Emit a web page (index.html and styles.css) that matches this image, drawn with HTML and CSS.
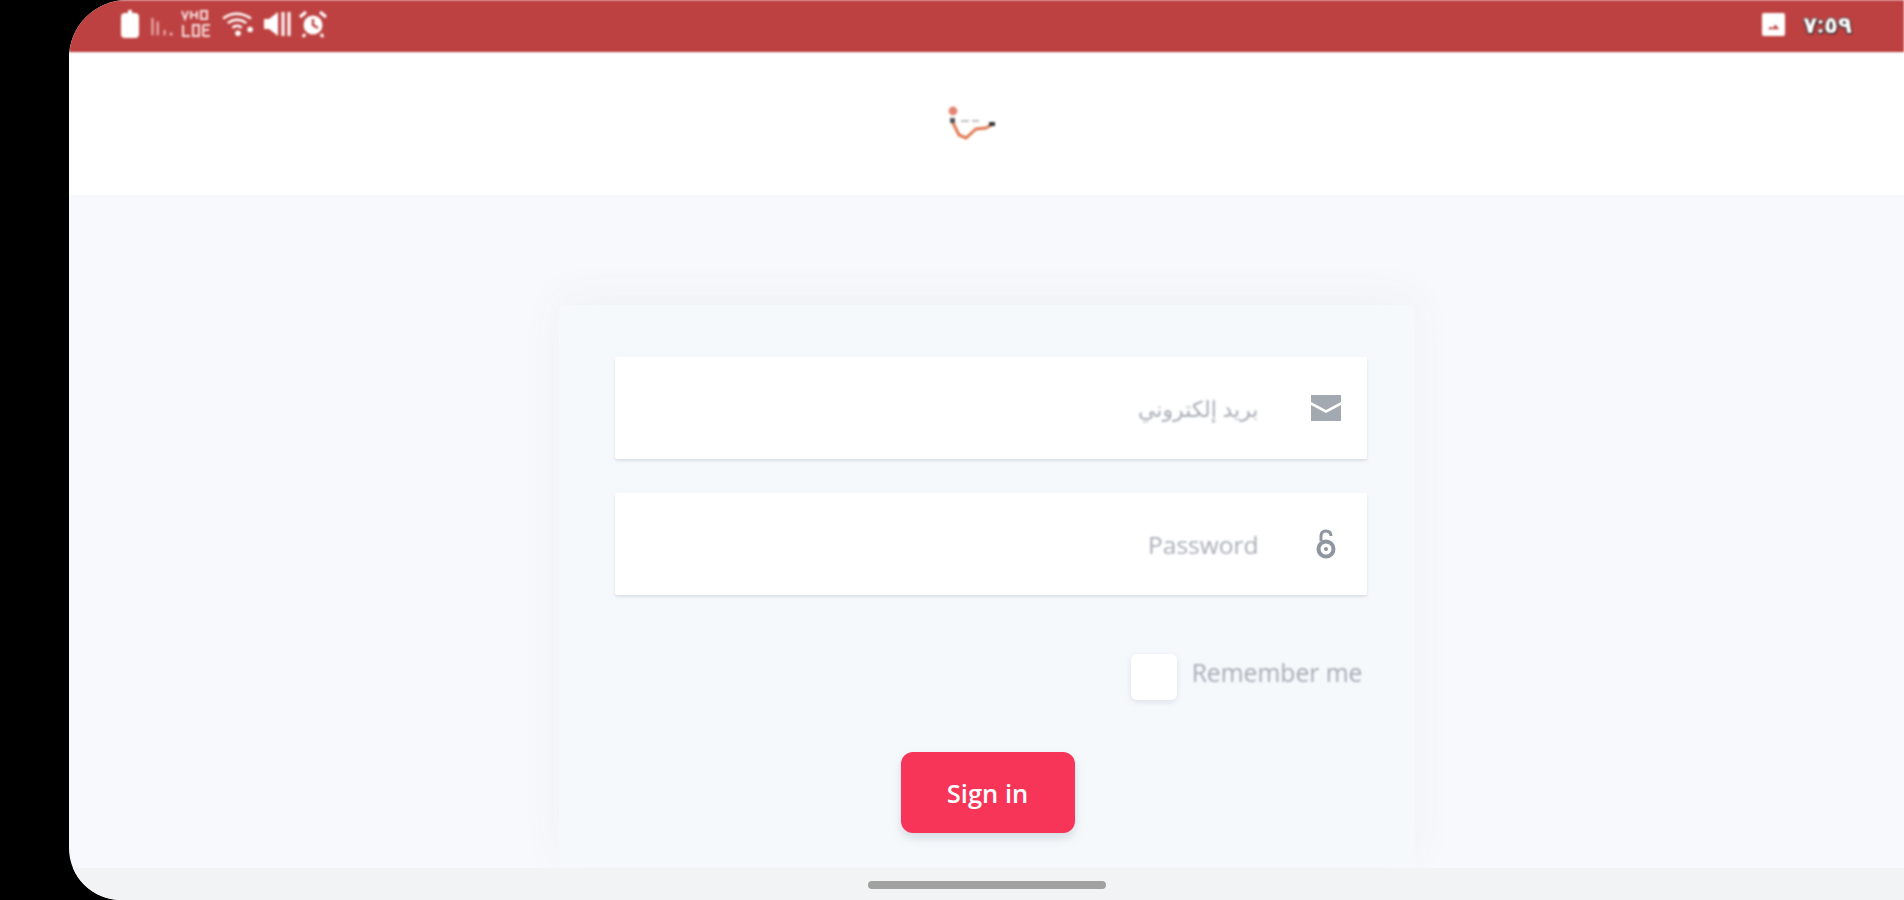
FILE: index.html
```html
<!DOCTYPE html>
<html lang="en">
<head>
    <meta charset="UTF-8">
    <title>Sign in</title>
    <link rel="stylesheet" href="styles.css">
</head>
<body>
    <div class="screen">
        <div class="status-bar">
            <div class="status-group">
                <svg class="ic-battery" viewBox="0 0 18 28"><path d="M4 3h3V0h4v3h3q4 0 4 4v17q0 4-4 4H4q-4 0-4-4V7q0-4 4-4z" fill="#fff"/></svg>
                <svg class="ic-signal" viewBox="0 0 30 26"><path d="M3 6h2v20H3zM9 10h2v16H9zM17 20h2v6h-2zM24 23h3v3h-3z" fill="#f3c9c9"/></svg>
                <svg class="ic-volte" viewBox="0 0 34 30"><g fill="none" stroke="#f6dcdc" stroke-width="2"><path d="M2 2l3 8 3-8M11 2v8M11 6h6M17 2v8M21 2h6v8h-6zM3 16v11h7M13 16h6v11h-6zM23 16h7M23 21h6M23 27h7M23 16v11"/></g></svg>
                <svg class="ic-wifi" viewBox="0 0 36 28"><g fill="none" stroke="#fff" stroke-width="2.6"><path d="M2 8q14-10 30 0"/><path d="M7 13q10-7 20 0"/><path d="M12 18q5-4 10 0"/></g><circle cx="18" cy="24" r="3" fill="#fff"/><circle cx="31" cy="20" r="3" fill="#fff"/></svg>
                <svg class="ic-mute" viewBox="0 0 28 28"><path d="M1 9h5l9-7v24l-9-7H1z" fill="#fff"/><path d="M20 2v24M26 2v24" stroke="#fff" stroke-width="3"/></svg>
                <svg class="ic-alarm" viewBox="0 0 28 28"><circle cx="14" cy="15" r="9.5" fill="#fff"/><path d="M14 9v6l5 3" fill="none" stroke="#c04343" stroke-width="2.4"/><path d="M1 7l6-5M27 7l-6-5M6 24l-2 3M22 24l2 3" stroke="#fff" stroke-width="3"/></svg>
            </div>
            <div class="status-group status-right">
                <svg class="ic-picture" viewBox="0 0 24 24"><rect width="24" height="24" rx="2" fill="#fff"/><path d="M6 17l3-3 2 2 3-4 4 5z" fill="#c04343"/></svg>
                <span class="status-time">٧:٥٩</span>
            </div>
        </div>

        <header class="app-header">
            <svg class="logo" viewBox="0 0 50 40"><path d="M5 17l7 14 7 3 10-9 10-1 7-4" fill="none" stroke="#e07a52" stroke-width="3"/><circle cx="6" cy="7" r="4.4" fill="#e58470"/><rect x="3" y="14" width="5" height="5" fill="#555"/><rect x="42" y="18" width="6" height="4" fill="#333"/><path d="M14 17h8M25 17h7" stroke="#aaa" stroke-width="1.4"/></svg>
        </header>

        <main class="content">
            <form class="login-card">
                <div class="field">
                    <input class="field-input" type="text" dir="rtl" placeholder="بريد إلكتروني">
                    <span class="field-icon">
                        <svg class="ic-mail" viewBox="0 0 30 26"><path d="M0 0h30v7L15 15 0 7z" fill="#a3a9b1"/><path d="M0 10l15 8 15-8v16H0z" fill="#a3a9b1"/></svg>
                    </span>
                </div>
                <div class="field">
                    <input class="field-input field-input-latin" type="password" placeholder="Password">
                    <span class="field-icon">
                        <svg class="ic-lock" viewBox="0 0 20 30"><path d="M5 12V7q0-5 5-5t5 5" fill="none" stroke="#8f96a0" stroke-width="3"/><circle cx="10" cy="20" r="7.5" fill="none" stroke="#8f96a0" stroke-width="4"/><circle cx="10" cy="20" r="2" fill="#8f96a0"/></svg>
                    </span>
                </div>
                <label class="remember">
                    <span class="remember-box"></span>
                    <span class="remember-text">Remember me</span>
                </label>
                <button class="btn-signin" type="button">Sign in</button>
            </form>
        </main>

        <div class="nav-bar">
            <span class="nav-pill"></span>
        </div>
    </div>
</body>
</html>
```

FILE: styles.css
```css
html, body {
    margin: 0;
    padding: 0;
    height: 100%;
    background: #000;
}

body {
    padding-left: 69px;
    box-sizing: border-box;
    overflow: hidden;
    font-family: "Open Sans", "DejaVu Sans", sans-serif;
}

.screen {
    height: 900px;
    display: flex;
    flex-direction: column;
    overflow: hidden;
    background: #f8f9fc;
    border-radius: 58px 0 0 52px;
}

.status-bar {
    height: 48px;
    flex: none;
    display: flex;
    justify-content: space-between;
    align-items: center;
    padding: 0 52px 2px 52px;
    background: #be4141;
    border-bottom: 2px solid #b83636;
    filter: blur(.9px);
}

.status-group {
    display: flex;
    align-items: center;
    gap: 8px;
}

.status-right {
    gap: 18px;
}

.ic-battery { width: 18px; height: 28px; }
.ic-signal { width: 26px; height: 24px; margin-left: 2px; }
.ic-volte { width: 36px; height: 30px; margin-left: -4px; }
.ic-wifi { width: 34px; height: 26px; margin-left: -2px; }
.ic-mute { width: 28px; height: 28px; }
.ic-alarm { width: 28px; height: 28px; }
.ic-picture { width: 23px; height: 23px; }

.status-time {
    font-size: 23px;
    font-weight: 700;
    line-height: 28px;
    color: #fff;
    text-shadow: 1px 1px 1px #111, -1px 1px 1px #333, 0 -1px 1px #444;
}

.app-header {
    height: 143px;
    flex: none;
    display: flex;
    justify-content: center;
    align-items: center;
    background: #fff;
}

.logo {
    width: 50px;
    height: 40px;
    margin-right: 30px;
    filter: blur(1px);
}

.content {
    flex: 1;
    min-height: 0;
    display: flex;
    justify-content: center;
    padding-top: 110px;
    overflow: hidden;
}

.login-card {
    width: 752px;
    height: 510px;
    display: flex;
    flex-direction: column;
    padding: 52px 48px 0 56px;
    background: #f6f9fc;
    border-radius: 6px;
    box-shadow: 0 -8px 44px rgba(90, 100, 130, .05);
}

.field {
    display: flex;
    height: 102px;
    margin-bottom: 34px;
    background: #fff;
    border-radius: 2px;
    box-shadow: 0 2px 3px rgba(120, 135, 160, .22);
}

.field-input {
    flex: 1;
    min-width: 0;
    height: 100%;
    padding: 0 26px;
    box-sizing: border-box;
    border: none;
    outline: none;
    background: transparent;
    text-align: right;
    font-family: "Open Sans", "DejaVu Sans", sans-serif;
    font-size: 22px;
    filter: blur(.8px);
}

.field-input-latin {
    font-size: 24.5px;
}

.field-input::placeholder {
    color: #a9aeb6;
    opacity: 1;
}

.field-icon {
    width: 82px;
    flex: none;
    display: flex;
    justify-content: center;
    align-items: center;
    filter: blur(.6px);
}

.ic-mail { width: 30px; height: 26px; }
.ic-lock { width: 20px; height: 30px; }

.remember {
    display: flex;
    justify-content: flex-end;
    align-items: center;
    gap: 15px;
    margin-top: 25px;
    padding-right: 4px;
}

.remember-box {
    width: 46px;
    height: 46px;
    background: #fff;
    border-radius: 6px;
    box-shadow: 0 2px 6px rgba(110, 120, 140, .18);
}

.remember-text {
    margin-bottom: 10px;
    font-size: 24.7px;
    color: #a6acb5;
    filter: blur(.8px);
}

.btn-signin {
    align-self: center;
    width: 174px;
    height: 81px;
    margin-top: 52px;
    margin-left: -6px;
    flex: none;
    border: none;
    border-radius: 12px;
    background: #f73558;
    box-shadow: 0 5px 10px rgba(120, 130, 150, .25);
    color: #fff;
    font-family: "Open Sans", sans-serif;
    font-size: 25.5px;
    font-weight: 600;
    padding: 0;
}

.nav-bar {
    height: 32px;
    flex: none;
    display: flex;
    justify-content: center;
    align-items: center;
    background: #f2f3f4;
}

.nav-pill {
    width: 238px;
    height: 8px;
    margin-top: 2px;
    border-radius: 4px;
    background: #a1a1a1;
}
```
